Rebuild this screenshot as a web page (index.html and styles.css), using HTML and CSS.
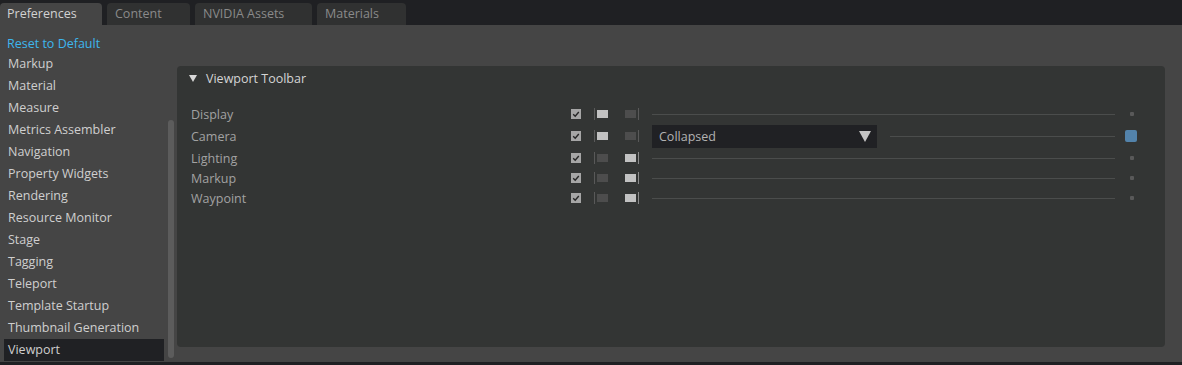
FILE: index.html
```html
<!DOCTYPE html>
<html>
<head>
<meta charset="utf-8">
<link rel="stylesheet" href="styles.css">
</head>
<body>
<div class="app">
  <div class="tabbar">
    <div class="tab active">Preferences</div>
    <div class="tab">Content</div>
    <div class="tab">NVIDIA Assets</div>
    <div class="tab">Materials</div>
  </div>
  <div class="main">
    <div class="sidebar">
      <div class="reset">Reset to Default</div>
      <div class="item">Markup</div>
      <div class="item">Material</div>
      <div class="item">Measure</div>
      <div class="item">Metrics Assembler</div>
      <div class="item">Navigation</div>
      <div class="item">Property Widgets</div>
      <div class="item">Rendering</div>
      <div class="item">Resource Monitor</div>
      <div class="item">Stage</div>
      <div class="item">Tagging</div>
      <div class="item">Teleport</div>
      <div class="item">Template Startup</div>
      <div class="item">Thumbnail Generation</div>
      <div class="item selected">Viewport</div>
    </div>
    <div class="scrolltrack"><div class="thumb"></div></div>
    <div class="panel">
      <div class="panel-header"><span class="tri"></span>Viewport Toolbar</div>
      <div class="rows">
        <div class="row">
          <div class="label">Display</div>
          <div class="check"><svg viewBox="0 0 10 10" width="10" height="10"><path d="M2.2 5.2 L4.2 7.2 L7.8 3" fill="none" stroke="#262626" stroke-width="1.4"/></svg></div>
          <div class="toggle left on"><span class="bar"></span><span class="knob"></span></div>
          <div class="toggle right"><span class="knob"></span><span class="bar"></span></div>
          <div class="value"><div class="line"></div></div>
          <div class="end"><span class="dot"></span></div>
        </div>
        <div class="row tall">
          <div class="label">Camera</div>
          <div class="check"><svg viewBox="0 0 10 10" width="10" height="10"><path d="M2.2 5.2 L4.2 7.2 L7.8 3" fill="none" stroke="#262626" stroke-width="1.4"/></svg></div>
          <div class="toggle left on"><span class="bar"></span><span class="knob"></span></div>
          <div class="toggle right"><span class="knob"></span><span class="bar"></span></div>
          <div class="value">
            <div class="combo"><span>Collapsed</span><span class="combo-arrow"></span></div>
            <div class="line"></div>
          </div>
          <div class="end"><span class="square"></span></div>
        </div>
        <div class="row">
          <div class="label">Lighting</div>
          <div class="check"><svg viewBox="0 0 10 10" width="10" height="10"><path d="M2.2 5.2 L4.2 7.2 L7.8 3" fill="none" stroke="#262626" stroke-width="1.4"/></svg></div>
          <div class="toggle left"><span class="bar"></span><span class="knob"></span></div>
          <div class="toggle right on"><span class="knob"></span><span class="bar"></span></div>
          <div class="value"><div class="line"></div></div>
          <div class="end"><span class="dot"></span></div>
        </div>
        <div class="row">
          <div class="label">Markup</div>
          <div class="check"><svg viewBox="0 0 10 10" width="10" height="10"><path d="M2.2 5.2 L4.2 7.2 L7.8 3" fill="none" stroke="#262626" stroke-width="1.4"/></svg></div>
          <div class="toggle left"><span class="bar"></span><span class="knob"></span></div>
          <div class="toggle right on"><span class="knob"></span><span class="bar"></span></div>
          <div class="value"><div class="line"></div></div>
          <div class="end"><span class="dot"></span></div>
        </div>
        <div class="row">
          <div class="label">Waypoint</div>
          <div class="check"><svg viewBox="0 0 10 10" width="10" height="10"><path d="M2.2 5.2 L4.2 7.2 L7.8 3" fill="none" stroke="#262626" stroke-width="1.4"/></svg></div>
          <div class="toggle left"><span class="bar"></span><span class="knob"></span></div>
          <div class="toggle right on"><span class="knob"></span><span class="bar"></span></div>
          <div class="value"><div class="line"></div></div>
          <div class="end"><span class="dot"></span></div>
        </div>
      </div>
    </div>
  </div>
  <div class="bottom"></div>
</div>
</body>
</html>
```
FILE: styles.css
```css
* { box-sizing: border-box; }
html, body { margin: 0; padding: 0; }
body {
  width: 1182px;
  height: 365px;
  overflow: hidden;
  background: #1f2023;
  font-family: "Open Sans", "Noto Sans", sans-serif;
  font-size: 12px;
}
.app { display: flex; flex-direction: column; height: 365px; }
.tabbar {
  height: 25px;
  background: #1f2023;
  display: flex;
  align-items: flex-end;
  gap: 5px;
}
.tab {
  height: 22px;
  line-height: 22px;
  padding: 0 8px;
  background: #303131;
  color: #8a8a8a;
  border-radius: 4px 4px 0 0;
  font-size: 12.5px;
}
.tab.active { background: #454545; color: #d2d2d2; width: 102px; padding-left: 7px; }
.tab:nth-child(2) { width: 83px; }
.tab:nth-child(3) { width: 117px; }
.tab:nth-child(4) { width: 89px; }
.main {
  flex: 1;
  background: #454545;
  display: flex;
  padding-left: 4px;
}
.sidebar {
  width: 160px;
  padding-top: 9px;
  display: flex;
  flex-direction: column;
}
.reset {
  height: 19px;
  line-height: 19px;
  padding-left: 3px;
  color: #3db6ee;
  font-size: 12.5px;
}
.item {
  height: 22px;
  line-height: 22px;
  padding-left: 4px;
  color: #cfcfcf;
  font-size: 12.5px;
}
.item.selected { background: #202124; }
.scrolltrack {
  width: 6px;
  margin-left: 4px;
  padding-top: 95px;
  padding-bottom: 4px;
  display: flex;
}
.thumb { flex: 1; background: #5c5c5c; border-radius: 3px; }
.panel {
  flex: 1;
  margin: 41px 17px 15px 3px;
  background: #333534;
  border-radius: 4px;
}
.panel-header {
  height: 24px;
  padding-top: 1px;
  display: flex;
  align-items: center;
  padding-left: 12px;
  color: #d4d4d4;
  font-size: 12.5px;
}
.tri {
  width: 0; height: 0;
  border-left: 4px solid transparent;
  border-right: 4px solid transparent;
  border-top: 7px solid #d8d8d8;
  margin-right: 9px;
}
.rows { padding-top: 14px; display: flex; flex-direction: column; }
.row { height: 20px; display: flex; align-items: center; padding-left: 14px; }
.row.tall { height: 24px; }
.label { width: 380px; color: #a2a2a2; font-size: 12.5px; }
.check { width: 10px; height: 10px; background: #a6a6a6; margin-right: 13px; display: flex; }
.toggle { height: 12px; display: flex; align-items: center; }
.toggle.left { width: 14px; margin-right: 17px; }
.toggle.right { width: 14px; margin-right: 13px; }
.bar { width: 1px; height: 12px; background: #595959; }
.knob { width: 11px; height: 8px; background: #4d4d4d; }
.toggle.left .knob { margin-left: 2px; }
.toggle.right .knob { margin-right: 2px; }
.toggle.on .knob { background: #c2c2c2; }
.toggle.right.on .bar { background: #8a8a8a; }
.value { flex: 1; display: flex; align-items: center; }
.line { flex: 1; height: 1px; background: #4b4d4c; }
.combo {
  width: 225px;
  height: 23px;
  background: #202124;
  display: flex;
  align-items: center;
  justify-content: space-between;
  padding: 0 6px 0 7px;
  color: #b2b2b2;
  font-size: 12.5px;
  margin-right: 13px;
}
.combo-arrow {
  width: 0; height: 0;
  border-left: 6px solid transparent;
  border-right: 6px solid transparent;
  border-top: 11px solid #c4c4c4;
}
.end { width: 50px; display: flex; align-items: center; padding-left: 15px; }
.dot { width: 4px; height: 4px; background: #595959; border-radius: 1px; }
.square { width: 12px; height: 12px; background: #5383ab; border-radius: 2px; margin-left: -5px; }
.bottom { height: 3px; background: #1f2023; }
```
